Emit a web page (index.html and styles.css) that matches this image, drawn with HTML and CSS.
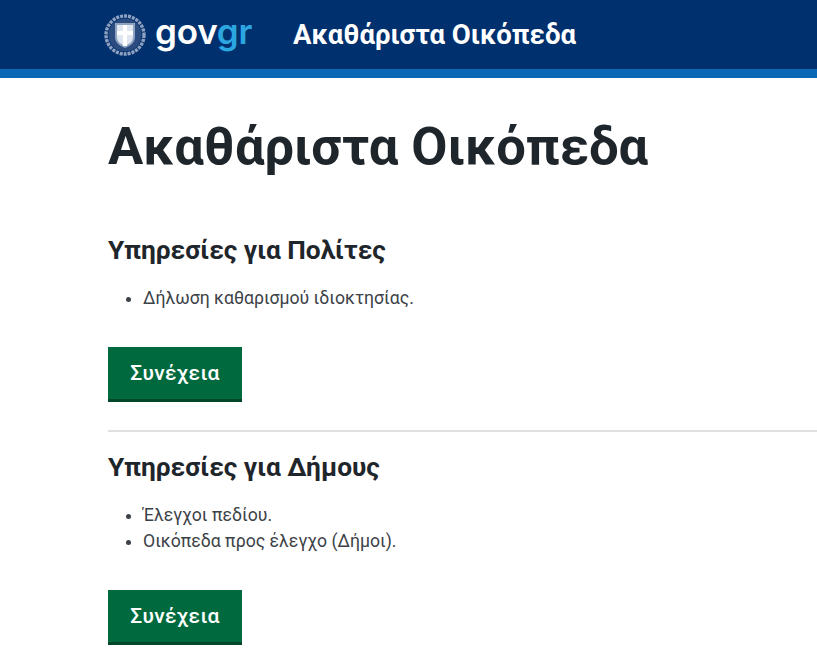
FILE: index.html
```html
<!DOCTYPE html>
<html lang="el">
<head>
<meta charset="utf-8">
<title>Ακαθάριστα Οικόπεδα</title>
<link rel="stylesheet" href="styles.css">
</head>
<body>
<header class="topbar">
  <div class="topbar-inner">
    <svg class="emblem" viewBox="0 0 42 42" aria-hidden="true">
      <circle cx="21" cy="21" r="19" fill="none" stroke="#8fa1c0" stroke-width="3.4" stroke-dasharray="3 1"/>
      <circle cx="21" cy="21" r="16.5" fill="#2c4c80"/>
      <path d="M11 9h20v14c0 6-5 9-10 11-5-2-10-5-10-11z" fill="#8ea2c2"/>
      <path d="M13 11h16v12c0 5-4 7-8 9-4-2-8-4-8-9z" fill="#dfe6f1"/>
      <path d="M19 11h4v21h-4zM13 17h16v4H13z" fill="#fff"/>
    </svg>
    <span class="wordmark">gov<span class="wordmark-gr">gr</span></span>
    <span class="service-name">Ακαθάριστα Οικόπεδα</span>
  </div>
</header>
<main class="content">
  <h1 class="page-title">Ακαθάριστα Οικόπεδα</h1>
  <section class="service">
    <h2 class="service-title">Υπηρεσίες για Πολίτες</h2>
    <ul class="service-list">
      <li>Δήλωση καθαρισμού ιδιοκτησίας.</li>
    </ul>
    <a class="start-button" href="#">Συνέχεια</a>
  </section>
  <hr class="divider">
  <section class="service">
    <h2 class="service-title">Υπηρεσίες για Δήμους</h2>
    <ul class="service-list">
      <li>Έλεγχοι πεδίου.</li>
      <li>Οικόπεδα προς έλεγχο (Δήμοι).</li>
    </ul>
    <a class="start-button" href="#">Συνέχεια</a>
  </section>
</main>
</body>
</html>
```
FILE: styles.css
```css
* { box-sizing: border-box; }
html, body { margin: 0; padding: 0; }
body {
  background: #fff;
  color: #1f262b;
  font-family: Roboto, "Liberation Sans", sans-serif;
  height: 657px;
  overflow: hidden;
}
.topbar {
  background: #00306e;
  border-bottom: 9px solid #0a68b4;
  height: 78px;
}
.topbar-inner {
  display: flex;
  align-items: center;
  height: 69px;
  padding-left: 104px;
}
.emblem { width: 42px; height: 42px; flex: none; }
.wordmark {
  margin-left: 9px;
  margin-top: -7px;
  width: 138px;
  font-family: Inter, sans-serif;
  font-size: 35px;
  font-weight: 600;
  letter-spacing: -0.2px;
  line-height: 42px;
  color: #fff;
}
.wordmark-gr { color: #2ba6e0; }
.service-name {
  color: #fff;
  font-size: 27.5px;
  font-weight: 700;
  line-height: 30px;
  white-space: nowrap;
}
.content { padding-left: 108px; }
.page-title {
  margin: 33px 0 0;
  font-size: 52.5px;
  font-weight: 700;
  line-height: 70px;
  white-space: nowrap;
}
.service-title {
  margin: 0;
  font-size: 26.3px;
  font-weight: 700;
  line-height: 32px;
}
.page-title + .service { margin-top: 53px; }
.service-list {
  margin: 19px 0 0;
  padding: 0 0 0 35px;
  color: #3c4247;
  font-size: 17.65px;
  line-height: 26px;
}
.start-button {
  display: block;
  width: 134px;
  height: 55px;
  margin-top: 36px;
  background: #006a3e;
  border-bottom: 3px solid #00462a;
  color: #fff;
  font-size: 21px;
  font-weight: 500;
  letter-spacing: 0.3px;
  line-height: 53px;
  text-align: center;
  text-decoration: none;
}
.divider {
  height: 2px;
  margin: 28px 0 19px;
  border: 0;
  background: #dfe0e1;
}
```
